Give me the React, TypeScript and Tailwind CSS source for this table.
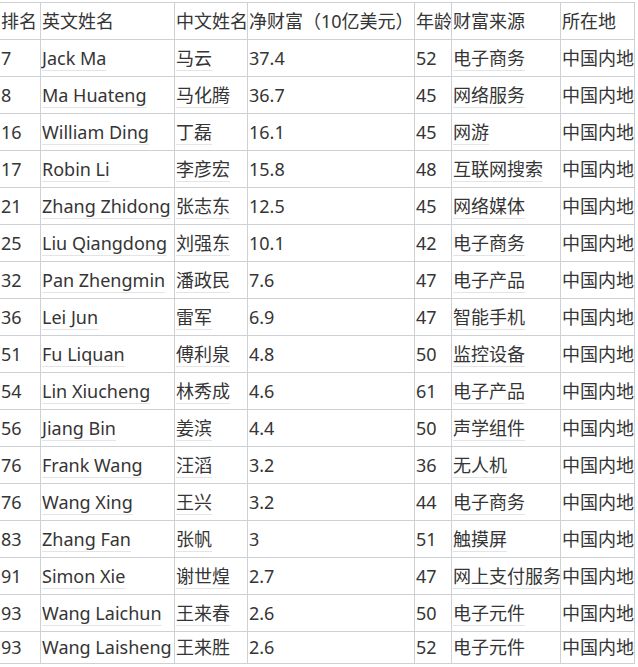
const rows: string[][] = [
  ['7', 'Jack Ma', '马云', '37.4', '52', '电子商务', '中国内地'],
  ['8', 'Ma Huateng', '马化腾', '36.7', '45', '网络服务', '中国内地'],
  ['16', 'William Ding', '丁磊', '16.1', '45', '网游', '中国内地'],
  ['17', 'Robin Li', '李彦宏', '15.8', '48', '互联网搜索', '中国内地'],
  ['21', 'Zhang Zhidong', '张志东', '12.5', '45', '网络媒体', '中国内地'],
  ['25', 'Liu Qiangdong', '刘强东', '10.1', '42', '电子商务', '中国内地'],
  ['32', 'Pan Zhengmin', '潘政民', '7.6', '47', '电子产品', '中国内地'],
  ['36', 'Lei Jun', '雷军', '6.9', '47', '智能手机', '中国内地'],
  ['51', 'Fu Liquan', '傅利泉', '4.8', '50', '监控设备', '中国内地'],
  ['54', 'Lin Xiucheng', '林秀成', '4.6', '61', '电子产品', '中国内地'],
  ['56', 'Jiang Bin', '姜滨', '4.4', '50', '声学组件', '中国内地'],
  ['76', 'Frank Wang', '汪滔', '3.2', '36', '无人机', '中国内地'],
  ['76', 'Wang Xing', '王兴', '3.2', '44', '电子商务', '中国内地'],
  ['83', 'Zhang Fan', '张帆', '3', '51', '触摸屏', '中国内地'],
  ['91', 'Simon Xie', '谢世煌', '2.7', '47', '网上支付服务', '中国内地'],
  ['93', 'Wang Laichun', '王来春', '2.6', '50', '电子元件', '中国内地'],
  ['93', 'Wang Laisheng', '王来胜', '2.6', '52', '电子元件', '中国内地'],
];

const header = ['排名', '英文姓名', '中文姓名', '净财富（10亿美元）', '年龄', '财富来源', '所在地'];

// columns that carry the faint link underline
const linked = [1, 2, 5];

export default function App() {
  return (
    <div className="bg-white w-[638px] h-[667px] overflow-hidden">
      <div
        className="mt-[2px] w-[635px] border-t border-[#cdd1d6] grid grid-cols-[41px_134px_73px_167px_37px_109px_74px] text-[18px] text-[#353535]"
        style={{ fontFamily: '"Noto Sans", "Noto Sans CJK SC", sans-serif' }}
      >
        {header.map((h, i) => (
          <div
            key={'h' + i}
            className="h-[37px] border-r border-b border-[#cdd1d6] pl-px flex items-center leading-[36px] whitespace-nowrap overflow-hidden"
          >
            {h}
          </div>
        ))}
        {rows.map((r, ri) =>
          r.map((c, ci) => (
            <div
              key={ri + '-' + ci}
              className={`${ri === rows.length - 1 ? 'h-[32px] leading-[31px]' : 'h-[37px] leading-[36px]'} border-r border-b border-[#cdd1d6] pl-px flex items-center whitespace-nowrap overflow-hidden`}
            >
              <span
                className={
                  linked.includes(ci) && ri < rows.length - 1
                    ? 'underline decoration-[#e4e4e4] underline-offset-[5px]'
                    : ''
                }
              >
                {c}
              </span>
            </div>
          ))
        )}
      </div>
    </div>
  );
}
